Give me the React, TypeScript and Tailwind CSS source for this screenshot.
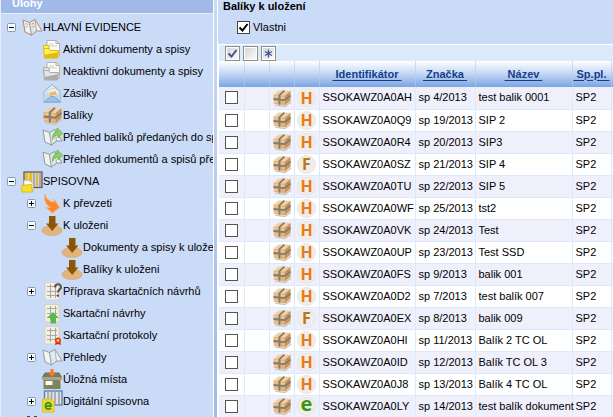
import type { ReactNode } from 'react';

type Kind = 'book' | 'folderYellow' | 'folderGrey' | 'mail' | 'box' | 'bookArrow' | 'shelf' | 'curve' | 'store' | 'gridQ' | 'gridUp' | 'gridSeal' | 'bookGrey' | 'crate' | 'digital' | 'binoculars';

const Sheet = ({ children }: { children?: ReactNode }) => (
  <>
    <rect x="3" y="1.500" width="14" height="17.500" fill="#f4efe4" stroke="#d8d1c0" />
    <path d="M5 5.500h10M5 10.500h10M5 14.500h10M8.500 3v14M13.500 3v14" stroke="#aaa89c" fill="none" />
    {children}
  </>
);

const Folder = ({ top, bottom }: { top: string; bottom: string }) => (
  <>
    <path d="M5 1.500h9l3.500 3V17H5z" fill="#fafafa" stroke="#b9b2a8" />
    <path d="M14 1.500v3h3.500" stroke="#c9a97c" />
    <path d="M7 5h5M7 7h8" stroke="#cfcfcf" />
    <path d="M1.500 6.500h5l1 3h-6z" fill={top} stroke={bottom} />
    <path d="M1.500 9.500h5l1.500 2h8.500l-1 7.500h-13z" fill={bottom} />
    <path d="M2 9.500h4.500l1.500 2h8.500v1.500L2.500 16z" fill={top} />
    <path d="M1.500 9.500h5l1.500 2h8.500l-1 7.500h-13z" fill="none" stroke={bottom} />
  </>
);

const Map = ({ ink, edge }: { ink: string; edge: string }) => (
  <>
    <path d="M1 3 7.500 5.500 13 2.500 20 14 14.500 14 9.500 18 3 15z" fill="#f1f4f2" stroke={edge} strokeWidth="1" strokeLinejoin="round" />
    <path d="M7.500 5.500 9.500 18 14.500 14" stroke={edge} fill="none" />
    <path d="M7.500 5.500 13 2.500 14.500 14 9.500 18z" fill="#dfe6e4" stroke={edge} strokeWidth=".7" />
    <path d="M3 6.500l3 1M3.500 9.500l2 .7M10 7l2-1M10.500 10l2-1" stroke={ink} strokeWidth="1.300" />
  </>
);

const Parcel = () => (
  <>
    <path d="M3 18 13.500 19.500l6.500-5" stroke="#ccc6bf" strokeWidth="1.500" fill="none" />
    <path d="M1.500 7 7 2.500l12.500.5-6 5z" fill="#f0d2a4" />
    <path d="M1.500 7l12 1v10.500l-11.500-2z" fill="#e4b273" />
    <path d="M13.500 8l6-5v10l-6 5.500z" fill="#c9955a" />
    <path d="M2.500 9l4 .3M9.500 10l3 .3M2.500 14.500l4 .5" stroke="#f3d6ab" />
    <path d="M13 2.800 7.800 7.500V17.500M1.500 11.500l12 1.200 6-4.700" stroke="#837c75" strokeWidth="2" fill="none" />
  </>
);

function Icon({ kind }: { kind: Kind }) {
  return (
    <svg viewBox="0 0 21 21" className="h-[21px] w-5 shrink-0 overflow-visible" preserveAspectRatio="xMinYMid slice" fill="none" aria-hidden="true">
      {kind === 'book' && <Map ink="#e0a09c" edge="#a98a82" />}
      {kind === 'bookGrey' && <Map ink="#f4f7f8" edge="#8ea0a8" />}
      {kind === 'bookArrow' && (
        <>
          <Map ink="#eef2ee" edge="#8d9a98" />
          <path d="M10.500 12.500c0-5 1.500-7.500 4.500-8V1L20.500 6l-4.500 5V8c-2.500 0-4 1-5.500 4.500z" fill="#86d563" stroke="#5cab43" strokeWidth=".7" />
        </>
      )}
      {kind === 'folderYellow' && <Folder top="#fff25e" bottom="#e0be08" />}
      {kind === 'folderGrey' && <Folder top="#e4e4e4" bottom="#ababab" />}
      {kind === 'mail' && (
        <>
          <path d="M2 8.500 10 1.500 18.500 8.500V19H2z" fill="#dcebf6" stroke="#8fb0ca" />
          <path d="M4.500 8.500 12 5l5 3-1 6-7 1z" fill="#f6f4ec" stroke="#d4c6a8" strokeWidth=".7" />
          <path d="M7 9.500l7-1.500 1 4-7 1z" fill="#e2ba84" />
          <path d="M2 9 9 14l-7 5zM18.500 9 12 14l6.500 5z" fill="#bcdaed" />
          <path d="M2 19l7-5.500h3L18.500 19z" fill="#9cc3df" stroke="#7ea7c6" />
        </>
      )}
      {kind === 'box' && <Parcel />}
      {kind === 'shelf' && (
        <>
          <rect x="2" y="1" width="18" height="15.500" fill="#d8d8d2" stroke="#625a55" strokeWidth="1.300" />
          <path d="M4.500 2v14M8.500 2v14" stroke="#efbd23" strokeWidth="3" />
          <path d="M12 2v14M18 2v14" stroke="#aaa" strokeWidth="2" />
          <path d="M15 2v14" stroke="#e0b443" strokeWidth="2" />
          <path d="M2 9.500h5l4 3v8H2z" fill="#fff" stroke="#c9c2ae" />
          <path d="M-.5 14.500l10-1 1 7.500H0z" fill="#f7df31" stroke="#dcbd10" />
        </>
      )}
      {kind === 'curve' && (
        <path d="M3 1c1 5 4 7.500 9 8V6l5.500 8.500L10.500 20 4 14.500h4.500C4 12 1.500 7 3 1z" fill="#f98a2b" stroke="#f9b274" />
      )}
      {kind === 'store' && (
        <>
          <ellipse cx="10" cy="15.500" rx="10" ry="5" fill="#e4b57a" stroke="#cfa063" strokeWidth=".6" />
          <path d="M7 1h6.500v7.500h3L10.200 16 4 8.500h3z" fill="#8b5707" />
        </>
      )}
      {kind === 'gridQ' && (
        <Sheet>
          <path d="M13 6.500c.2-4.500 6.500-4 6 0-.3 2-3 2-3 5M16 13.500v2.200" stroke="#565656" strokeWidth="2" fill="none" />
        </Sheet>
      )}
      {kind === 'gridUp' && (
        <Sheet>
          <path d="M11 9l6 6h-3v5.500H8.500V15H5z" fill="#5aba49" />
        </Sheet>
      )}
      {kind === 'gridSeal' && (
        <Sheet>
          <path d="M14 16l-1 4 3-1 3 1-1-4" fill="#c5281d" />
          <circle cx="16" cy="15.500" r="3" fill="#e33b1d" />
          <circle cx="16" cy="15.500" r="1.400" fill="#ffc83a" />
        </Sheet>
      )}
      {kind === 'crate' && (
        <>
          <path d="M3 4h14l3 5H0z" fill="#77776a" stroke="#6a6b5c" />
          <path d="M0 8h20v3H0z" fill="#a4a782" />
          <path d="M1.500 11h17v9h-17z" fill="#80845b" />
          <rect x="3.500" y="12" width="7" height="4" fill="#fafaf2" />
          <path d="M8.500 0h3v3.500H14L10 8 6 3.500h2.500z" fill="#f57c22" />
        </>
      )}
      {kind === 'digital' && (
        <>
          <rect x="2.500" y="0" width="17.500" height="14" fill="#e0e3e5" stroke="#527cae" strokeWidth="1.300" />
          <path d="M6 1v12M9.500 1v12M13 1v12M17 1v12" stroke="#a5a5a5" strokeWidth="1.700" />
          <path d="M.5 8h8l3.500 3v10H.5z" fill="#f4d92d" stroke="#dcc02a" />
          <path d="M3.500 15h5.500c0-4.500-5.500-4-5.500 0 0 4 4 3.500 5.500 2" stroke="#3f9a23" strokeWidth="2" />
        </>
      )}
      {kind === 'binoculars' && <path d="M5 6V3h3v3h4V3h3v3l3 9h-6v-4H9v4H2z" fill="#494949" />}
    </svg>
  );
}

type TreeItem = { label: string; icon: Kind; level: 0 | 1 | 2; expander?: 'plus' | 'minus' };

const tree: TreeItem[] = [
  { label: 'HLAVNÍ EVIDENCE', icon: 'book', level: 0, expander: 'minus' },
  { label: 'Aktivní dokumenty a spisy', icon: 'folderYellow', level: 1 },
  { label: 'Neaktivní dokumenty a spisy', icon: 'folderGrey', level: 1 },
  { label: 'Zásilky', icon: 'mail', level: 1 },
  { label: 'Balíky', icon: 'box', level: 1 },
  { label: 'Přehled balíků předaných do spisovny', icon: 'bookArrow', level: 1 },
  { label: 'Přehled dokumentů a spisů předaných', icon: 'bookArrow', level: 1 },
  { label: 'SPISOVNA', icon: 'shelf', level: 0, expander: 'minus' },
  { label: 'K převzeti', icon: 'curve', level: 1, expander: 'plus' },
  { label: 'K uloženi', icon: 'store', level: 1, expander: 'minus' },
  { label: 'Dokumenty a spisy k uložení', icon: 'store', level: 2 },
  { label: 'Balíky k uloženi', icon: 'store', level: 2 },
  { label: 'Příprava skartačních návrhů', icon: 'gridQ', level: 1, expander: 'plus' },
  { label: 'Skartační návrhy', icon: 'gridUp', level: 1 },
  { label: 'Skartační protokoly', icon: 'gridSeal', level: 1 },
  { label: 'Přehledy', icon: 'bookGrey', level: 1, expander: 'plus' },
  { label: 'Úložná místa', icon: 'crate', level: 1 },
  { label: 'Digitální spisovna', icon: 'digital', level: 1, expander: 'plus' },
];

const indent = { 0: 'pl-px', 1: 'pl-[21px]', 2: 'pl-[41px]' };

type Mark = 'H' | 'F' | 'e';

const rows: [Mark, string, string, string][] = [
  ['H', 'SSOKAWZ0A0AH', 'sp 4/2013', 'test balik 0001'],
  ['H', 'SSOKAWZ0A0Q9', 'sp 19/2013', 'SIP 2'],
  ['H', 'SSOKAWZ0A0R4', 'sp 20/2013', 'SIP3'],
  ['F', 'SSOKAWZ0A0SZ', 'sp 21/2013', 'SIP 4'],
  ['H', 'SSOKAWZ0A0TU', 'sp 22/2013', 'SIP 5'],
  ['H', 'SSOKAWZ0A0WF', 'sp 25/2013', 'tst2'],
  ['H', 'SSOKAWZ0A0VK', 'sp 24/2013', 'Test'],
  ['H', 'SSOKAWZ0A0UP', 'sp 23/2013', 'Test SSD'],
  ['H', 'SSOKAWZ0A0FS', 'sp 9/2013', 'balik 001'],
  ['H', 'SSOKAWZ0A0D2', 'sp 7/2013', 'test balík 007'],
  ['F', 'SSOKAWZ0A0EX', 'sp 8/2013', 'balik 009'],
  ['H', 'SSOKAWZ0A0HI', 'sp 11/2013', 'Balík 2 TC OL'],
  ['H', 'SSOKAWZ0A0ID', 'sp 12/2013', 'Balík TC OL 3'],
  ['H', 'SSOKAWZ0A0J8', 'sp 13/2013', 'Balík 4 TC OL'],
  ['e', 'SSOKAWZ0A0LY', 'sp 14/2013', 'test balík dokument'],
];

const markColor = {
  H: 'text-[16px] text-[#ea7a16]',
  F: 'text-[16px] text-[#b57a1c]',
  e: 'pb-1 text-[20px] text-[#3f9410]',
};

function Expander({ state, label }: { state: 'plus' | 'minus'; label: string }) {
  return (
    <button type="button" aria-label={label} aria-expanded={state === 'minus'} className="ml-[5px] block size-[9px]">
      <svg viewBox="0 0 9 9" className="size-[9px]">
        <rect x=".5" y=".5" width="8" height="8" rx="1" fill="#f8fafb" stroke="#7f9db9" />
        <path d={state === 'plus' ? 'M2 4.500h5M4.500 2v5' : 'M2 4.500h5'} stroke="#000" />
      </svg>
    </button>
  );
}

function ToolButton({ label, children }: { label: string; children?: ReactNode }) {
  return (
    <button type="button" aria-label={label} className="grid size-[15px] place-items-center border border-[#8f8f8f] bg-linear-to-br from-[#d2d2d2] to-white ring-1 ring-white ring-inset">
      {children}
    </button>
  );
}

const Tick = ({ className }: { className: string }) => (
  <svg viewBox="0 0 11 11" className={className} aria-hidden="true">
    <path d="M1.500 5.500 4.500 8.500 9.500 2" fill="none" stroke="currentColor" strokeWidth="2" />
  </svg>
);

function HeaderLink({ children }: { children: string }) {
  return (
    <a href="#" className="text-[#153e8b] underline underline-offset-2">
      {'\u00a0' + children + '\u00a0'}
    </a>
  );
}

export default function App() {
  return (
    <div className="flex h-screen overflow-hidden bg-white font-['Liberation_Sans',Arial,sans-serif] text-[11px] leading-[13px] text-black">
      <aside className="w-[213px] shrink-0 overflow-hidden border-l border-[#e6effb] bg-[#cadbf7]">
        <h2 className="flex h-[14px] items-end border-b border-[#e6effb] bg-[#a0b9e7] pb-[3px] pl-[11px] font-bold text-white">Úlohy</h2>
        <ul className="pt-0.5">
          {tree.map((n) => (
            <li key={n.label} className={`flex h-[22px] items-center ${indent[n.level]}`}>
              <span className="w-5 shrink-0">{n.expander && <Expander state={n.expander} label={n.label} />}</span>
              <Icon kind={n.icon} />
              <a href="#" className="whitespace-nowrap pl-px">{n.label}</a>
            </li>
          ))}
          <li className="flex h-[22px] items-center pl-[21px]"><Icon kind="binoculars" /></li>
        </ul>
      </aside>
      <div className="w-[5px] shrink-0 border-x border-white bg-linear-to-b from-[#cadbf7] to-[#a0b9e7]" />
      <main className="min-w-0 flex-1 overflow-hidden">
        <section className="h-[45px] border-b border-white bg-[#cadbf7] pl-[5px]">
          <h1 className="h-[21px] leading-[12px] font-bold">Balíky k uložení</h1>
          <label className="flex items-center gap-[3px] pl-[14px]">
            <span className="relative size-[13px]">
              <input type="checkbox" defaultChecked className="peer block size-[13px] appearance-none border border-[#444] bg-white" />
              <Tick className="pointer-events-none absolute inset-px hidden size-[11px] peer-checked:block" />
            </span>
            Vlastni
          </label>
        </section>
        <div className="ml-px flex h-4 items-center gap-[3px] bg-[#dcebfc] pl-1.5">
          <ToolButton label="Označit vše"><Tick className="size-[11px] text-[#3c5590]" /></ToolButton>
          <ToolButton label="Zrušit označení" />
          <ToolButton label="Obrátit označení">
            <svg viewBox="0 0 11 11" className="size-[11px]"><path d="M5.500 1.500v8M2 3.500l7 4M9 3.500l-7 4" stroke="#3c5590" strokeWidth="1.400" /></svg>
          </ToolButton>
        </div>
        <table className="ml-px w-full table-fixed border-collapse">
          <colgroup>
            <col className="w-[25px]" />
            <col className="w-[25px]" />
            <col className="w-[25px]" />
            <col className="w-[25px]" />
            <col className="w-24" />
            <col className="w-[60px]" />
            <col className="w-[97px]" />
            <col className="w-[39px]" />
            <col />
          </colgroup>
          <thead>
            <tr className="h-[26px] bg-linear-to-b from-white via-[#c2d6f5] to-[#7ba5e3] *:border-r *:border-[#b4ccf3]/60 *:p-0">
              <th /><th /><th /><th />
              <th><HeaderLink>Identifikátor</HeaderLink></th>
              <th><HeaderLink>Značka</HeaderLink></th>
              <th><HeaderLink>Název</HeaderLink></th>
              <th><HeaderLink>Sp.pl.</HeaderLink></th>
              <th />
            </tr>
          </thead>
          <tbody>
            {rows.map(([mark, id, ref, name]) => (
              <tr key={id} className="h-[22px] whitespace-nowrap odd:bg-[#f0f0fc] even:bg-white *:border-r *:border-b *:border-[#dcebfc] *:p-0">
                <td><input type="checkbox" aria-label={id} className="mx-auto block size-[13px] appearance-none border border-[#555] bg-white" /></td>
                <td />
                <td><svg viewBox="0 0 21 21" className="mx-auto block size-5" aria-hidden="true"><Parcel /></svg></td>
                <td>
                  <span className={`mx-auto flex size-[19px] items-center justify-center rounded-full border border-[#efe4d6] bg-[#eeeeec] font-['Open_Sans',sans-serif] leading-4 font-bold ${markColor[mark]}`}>{mark}</span>
                </td>
                <td><span className="pl-[3px]">{id}</span></td>
                <td><span className="pl-[3px]">{ref}</span></td>
                <td><span className="pl-[3px]">{name}</span></td>
                <td><span className="pl-[3px]">SP2</span></td>
                <td />
              </tr>
            ))}
          </tbody>
        </table>
      </main>
    </div>
  );
}
